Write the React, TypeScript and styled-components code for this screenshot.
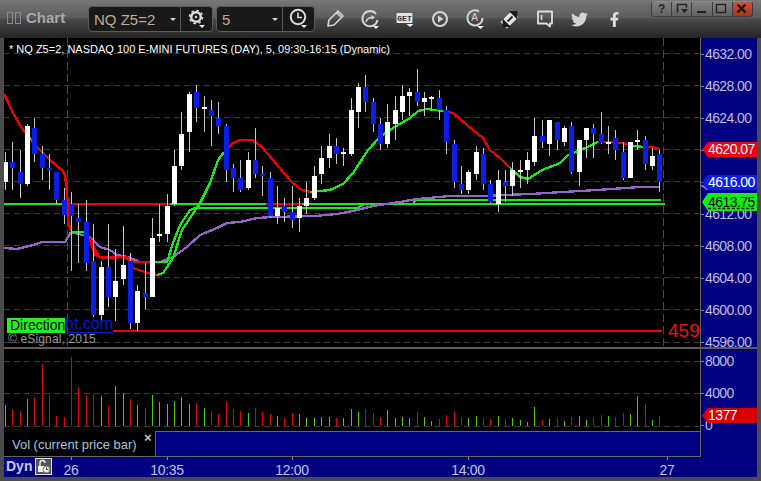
import React from "react";
import styled, { createGlobalStyle } from "styled-components";
import { FaTwitter, FaFacebookF } from "react-icons/fa";

const Global = createGlobalStyle`
  html, body { margin: 0; padding: 0; background: #4a4a4a; }
  body { font-family: "Liberation Sans", Arial, sans-serif; }
`;

const Win = styled.div`
  width: 761px; height: 481px; display: flex; flex-direction: column;
  background: #4c4c4c; overflow: hidden;
`;
const Toolbar = styled.div`
  height: 38px; flex: none; display: flex; align-items: flex-start;
  background: linear-gradient(#787878 0, #5a5a5a 47%, #4a4a4a 50%, #242424 100%);
`;
const Grip = styled.div`
  display: flex; gap: 2px; margin: 12px 5px 0 7px;
`;
const GripBar = styled.span`
  width: 4px; height: 10px; border: 1px solid #8a8a8a; display: block;
`;
const TitleText = styled.div`
  font-weight: 700; font-size: 15px; color: #a9a9a9; line-height: 18px; margin-top: 9px; width: 62px;
`;
const Combo = styled.div<{ $w: number; $mr: number }>`
  width: ${p => p.$w}px; margin: 6px ${p => p.$mr}px 0 0; height: 26px; box-sizing: border-box;
  display: flex; align-items: stretch; background: #191919;
  border: 1px solid #5a5a5a; border-radius: 4px;
`;
const ComboText = styled.div`
  flex: 1; display: flex; align-items: center; justify-content: space-between;
  padding: 0 3px 0 5px; color: #bcae92; font-size: 15px;
`;
const Caret = styled.span`
  width: 0; height: 0; border-left: 3px solid transparent; border-right: 3px solid transparent;
  border-top: 3px solid #cfcfcf; margin-right: 1px;
`;
const ComboBtn = styled.div`
  width: 31px; flex: none; border-left: 1px solid #555; display: flex; align-items: center; justify-content: center;
`;
const IconSlot = styled.div`
  width: 35px; height: 38px; flex: none; display: flex; align-items: center; justify-content: center; color: #d6d6d6;
`;
const WinButtons = styled.div`
  margin: 1px 9px 0 auto; width: 100px; height: 14px; display: flex; box-sizing: content-box;
  border: 1px solid #3c3c3c; border-top: 1px solid #8a8a8a; border-radius: 3px 3px 4px 4px; overflow: hidden; background: #6a6a6a;
  position: relative; right: -1px;
`;
const WinBtn = styled.div<{ $close?: boolean }>`
  flex: 1; display: flex; align-items: center; justify-content: center; font-size: 12px; font-weight: 700;
  color: #222; border-left: 1px solid #3e3e3e;
  background: ${p => (p.$close ? "linear-gradient(#c8553c,#a8341c)" : "linear-gradient(#828282,#626262)")};
  &:first-child { border-left: none; }
`;
const Content = styled.div`
  flex: none; margin: 0 4px; width: 753px; display: flex; flex-direction: column;
`;
const PriceRow = styled.div`
  height: 309px; display: flex;
`;
const Plot = styled.div`
  width: 696px; height: 309px; background: #000; position: relative; overflow: hidden; flex: none;
`;
const Axis = styled.div`
  width: 57px; flex: none; background: #000080; border-left: 1px solid #666; box-sizing: border-box;
  position: relative; overflow: hidden;
`;
const AxisLabel = styled.div`
  height: 32px; line-height: 32px; font-size: 14px; letter-spacing: -0.6px; color: #bcbce4; padding-left: 4px; position: relative;
  &::before { content: ""; position: absolute; left: 0; top: 16px; width: 3px; height: 1px; background: #888; }
`;
const VolLabels = styled.div`
  margin-top: -4px;
`;
const Tag = styled.div<{ $top: number; $bg: string; $fg: string; $h: number; $dashed?: boolean }>`
  position: absolute; left: 1px; width: 56px; top: ${p => p.$top}px; height: ${p => p.$h}px;
  line-height: ${p => p.$h}px; background: ${p => p.$bg}; color: ${p => p.$fg};
  font-size: 14px; letter-spacing: -0.55px; padding-left: 6px; box-sizing: border-box;
  clip-path: polygon(0 50%, 6px 0, 100% 0, 100% 100%, 6px 100%);
  text-decoration: ${p => (p.$dashed ? "underline dashed #222" : "none")};
`;
const Stub = styled.svg`
  position: absolute; left: 0; top: 147px;
`;
const Separator = styled.div`
  height: 2px; background: #5c5c5c;
`;
const VolRow = styled.div`
  height: 107px; display: flex;
`;
const VolLeft = styled.div`
  width: 696px; flex: none; display: flex; flex-direction: column;
`;
const VolPlot = styled.div`
  height: 82px; background: #000;
`;
const Legend = styled.div`
  height: 25px; display: flex;
`;
const LegendName = styled.div`
  width: 151px; background: #000; color: #a9c3dc; font-size: 13px; position: relative; box-sizing: border-box;
  padding: 5px 0 0 8px; line-height: 17px; letter-spacing: -0.02px;
`;
const LegendClose = styled.span`
  position: absolute; left: 140px; top: 0; font-size: 13px; font-weight: 700; color: #c8c8c8; line-height: 13px;
`;
const LegendBlue = styled.div`
  flex: 1; background: #000080; border-top: 1px solid #666; border-left: 1px solid #666;
`;
const TimeRow = styled.div`
  height: 21px; background: #000080; display: flex;
`;
const TimeAxis = styled.div`
  width: 697px; flex: none; border-top: 1px solid #666; position: relative; box-sizing: border-box;
`;
const DynLabel = styled.span`
  position: absolute; left: 2px; top: 1px; font-weight: 700; font-size: 14px; line-height: 17px; color: #c4c8ec;
`;
const DynBtn = styled.div`
  position: absolute; left: 31px; top: 1px; width: 17px; height: 17px; box-sizing: border-box;
  background: #555; border: 1px solid #ddd; display: flex; align-items: center; justify-content: center;
`;
const TimeTick = styled.span<{ $x: number }>`
  position: absolute; left: ${p => p.$x}px; top: 0; width: 1px; height: 3px; background: #888;
`;
const TimeLabel = styled.span<{ $x: number }>`
  position: absolute; left: ${p => p.$x}px; top: 5px; transform: translateX(-50%);
  font-size: 14px; line-height: 16px; letter-spacing: -0.3px; color: #bcc4ec;
`;
const ChartTitle = styled.div`
  position: absolute; left: 5px; top: 5px; font-size: 11px; line-height: 13px; color: #fff; white-space: nowrap;
`;
const Direction = styled.div`
  position: absolute; left: 3px; top: 280px; width: 58px; height: 15px; background: #22f01a; color: #000;
  font-size: 14px; line-height: 15px; padding-left: 3px; box-sizing: border-box;
`;
const LinkText = styled.div`
  position: absolute; left: 61px; top: 277px; font-size: 16px; line-height: 18px; color: #0018d8;
  border-bottom: 1px solid #0018d8; height: 17px; width: 48px; overflow: hidden; white-space: nowrap;
`;
const Copy = styled.div`
  position: absolute; left: 4px; top: 294px; font-size: 12px; line-height: 14px; color: #9a9a9a; letter-spacing: 0.15px;
`;
const LastValue = styled.div`
  position: absolute; left: 664px; top: 282px; font-size: 19px; line-height: 22px; color: #ee1111; white-space: nowrap;
`;
const ChartSvg = styled.svg`
  position: absolute; left: 0; top: 0; display: block;
`;
const VolSvg = styled.svg`
  display: block;
`;

type C = [string, number, number, number, number];
const candles: C[] = [
  ["w",162,182,152,190],["b",162,168,142,190],["b",172,184,150,198],["w",126,184,124,186],["b",128,154,118,162],
  ["b",154,168,146,180],["b",168,170,154,190],["b",172,200,172,204],["b",200,215,188,224],["b",204,216,192,271],
  ["b",218,222,204,263],["b",222,263,200,271],["b",261,315,224,317],["w",267,315,261,321],["b",267,297,224,307],
  ["w",281,297,249,321],["w",265,279,226,285],["b",261,323,253,329],["w",291,323,285,331],["b",293,297,263,309],
  ["w",238,297,218,297],["w",234,236,204,242],["w",206,234,194,242],["w",166,204,150,206],["w",134,166,112,170],
  ["w",94,132,92,152],["b",92,108,85,122],["w",107,109,96,132],["b",110,116,100,146],["b",118,126,102,134],
  ["b",126,170,124,182],["b",168,178,164,192],["b",178,190,160,192],["w",160,188,152,190],["b",160,174,128,178],
  ["b",174,176,166,196],["b",178,216,172,218],["w",208,216,186,224],["b",206,212,198,222],["b",212,220,186,228],
  ["w",206,218,198,232],["w",198,206,182,214],["w",176,198,166,200],["w",158,174,146,184],["w",146,158,134,168],
  ["b",146,154,138,164],["w",152,154,148,166],["w",110,154,98,156],["w",87,112,83,128],["b",87,102,75,112],
  ["b",102,124,98,132],["b",124,144,118,150],["w",122,144,104,148],["w",110,124,96,140],["w",96,112,85,120],
  ["w",92,96,88,116],["b",92,102,69,106],["w",98,102,92,116],["w",97,99,96,110],["b",98,110,90,120],
  ["b",110,142,106,154],["b",144,182,140,188],["b",184,190,166,194],["w",172,190,170,194],["w",152,174,146,180],
  ["b",154,184,148,190],["b",184,202,180,203],["w",180,204,170,212],["b",182,186,170,202],["w",170,186,162,196],
  ["w",170,172,160,188],["w",160,170,152,184],["w",136,162,118,166],["b",136,142,120,148],["w",120,144,120,156],
  ["b",122,140,122,150],["w",128,142,126,146],["b",126,172,122,174],["w",140,172,140,186],["w",128,140,128,158],
  ["b",128,134,124,158],["b",134,143,112,144],["w",142,144,126,154],["b",138,150,130,160],["b",152,178,142,180],
  ["w",142,178,142,178],["w",140,142,130,150],["b",140,164,136,170],["w",156,166,148,170],["b",154,182,150,192],
];
const cx = (i: number) => Math.floor(5.45 + i * 7.354);

const vols: [string, number][] = [
  ["g",195],["r",208],["r",213],["g",177],["r",171],["r",72],["r",165],["r",228],["r",232],["r",52],
  ["r",141],["r",165],["r",162],["g",168],["r",198],["g",138],["g",159],["r",177],["g",195],["r",204],
  ["g",165],["g",186],["g",192],["g",183],["g",171],["g",192],["r",189],["g",204],["r",213],["r",222],
  ["r",186],["r",207],["r",213],["g",219],["r",204],["r",216],["r",222],["g",228],["r",234],["r",219],
  ["g",222],["g",234],["g",234],["g",231],["g",231],["r",234],["g",234],["g",207],["g",216],["r",207],
  ["r",219],["r",231],["g",210],["g",234],["g",231],["g",234],["r",216],["g",231],["g",243],["r",237],
  ["r",225],["r",216],["r",231],["g",234],["g",228],["r",234],["r",237],["g",228],["r",237],["g",234],
  ["g",240],["g",246],["g",201],["r",240],["g",237],["r",234],["g",243],["r",231],["g",228],["g",240],
  ["r",234],["r",225],["g",228],["r",231],["r",219],["g",222],["g",168],["r",192],["g",240],["r",228],
];

const RED = "#f00000";
const GREEN = "#10f010";
const PURPLE = "#9464c8";
const segs: [string, number[][]][] = [
  [PURPLE, [[4,248],[17,249],[33,245],[42,242],[65,242],[71,232],[90,237],[100,247],[110,250],[117,255],[128,257],[140,262],[160,262],[173,257],[187,247],[200,235],[217,228],[227,223],[240,222],[257,218],[273,217],[315,216],[337,214],[353,211],[373,206],[400,202],[417,199],[450,196],[480,196],[530,194],[563,192],[597,190],[640,187],[660,187]]],
  [RED, [[4,94],[8,102],[13,113],[20,125],[25,132],[28,136]]],
  [GREEN, [[28,136],[31,140]]],
  [RED, [[31,140],[38,148],[50,160],[63,171],[65,176],[66,183],[68,203],[68,220],[71,232]]],
  [RED, [[86,232],[90,240],[95,255],[103,258],[127,257],[133,268],[148,273],[157,275]]],
  [GREEN, [[157,275],[163,273],[173,258],[182,230],[200,203],[210,183],[218,160],[224,152]]],
  [RED, [[224,152],[233,143],[240,140],[253,140],[262,147],[273,160],[290,180],[300,189],[310,192]]],
  [GREEN, [[310,192],[320,191],[330,190],[343,184],[353,173],[368,150],[380,137],[393,128],[410,118],[418,111],[427,109],[443,111]]],
  [RED, [[443,111],[453,113],[473,130],[483,138],[490,150],[500,158],[510,168]]],
  [GREEN, [[510,168],[520,177],[528,179],[542,170],[560,163],[568,155],[583,149],[598,142]]],
  [RED, [[598,142],[608,142],[623,143],[633,146]]],
  [GREEN, [[633,146],[645,147]]],
  [RED, [[645,147],[652,147],[660,149]]],
  [GREEN, [[71,232],[86,232]]],
  [RED, [[90,237],[95,250],[100,257],[110,257],[123,257],[130,260],[133,262],[147,262],[155,262]]],
  [GREEN, [[155,262],[167,262],[173,243],[180,225],[190,210],[200,207]]],
];

const gridY = [53, 85, 117, 149, 181, 213, 245, 277, 309, 342];
const pts = (a: number[][]) => a.map(p => p.join(",")).join(" ");
const prices = ["4632.00","4628.00","4624.00","","","4612.00","4608.00","4604.00","4600.00","4596.00"];

const Gear = () => (
  <svg width="20" height="22" viewBox="0 0 20 22">
    <circle cx="9" cy="9" r="4.8" fill="none" stroke="#ddd" strokeWidth="2.4" />
    <circle cx="9" cy="9" r="6.6" fill="none" stroke="#ddd" strokeWidth="1.4" strokeDasharray="2.6 2.6" />
    <circle cx="9" cy="9" r="1.2" fill="#ddd" />
    <path d="M12 17h6l-3 3z" fill="#eee" />
  </svg>
);
const Clock = () => (
  <svg width="20" height="22" viewBox="0 0 20 22">
    <circle cx="9" cy="9" r="7.2" fill="none" stroke="#ddd" strokeWidth="2" />
    <path d="M9 4.5V9.5H13" fill="none" stroke="#ddd" strokeWidth="1.6" />
    <path d="M12 17h6l-3 3z" fill="#eee" />
  </svg>
);
const Pencil = () => (
  <svg width="20" height="20" viewBox="0 0 20 20">
    <path d="M3 17l1-6L13 2l5 5-9 9z M11.500 3.500l5 5" fill="none" stroke="#cfcfcf" strokeWidth="1.7" strokeLinejoin="round" />
  </svg>
);
const CircleArrow = () => (
  <svg width="20" height="20" viewBox="0 0 20 20">
    <path d="M16 5A7.6 7.6 0 1 0 17.5 11" fill="none" stroke="#d4d4d4" strokeWidth="2" />
    <path d="M6 13c1-3 3-4.500 6-4.500" fill="none" stroke="#d4d4d4" strokeWidth="1.6" />
    <path d="M11.500 6l3.500 2.500-3.500 2.500z" fill="#d4d4d4" />
    <path d="M13 17h6l-3 3z" fill="#eee" />
  </svg>
);
const GetIcon = () => (
  <svg width="30" height="26" viewBox="0 0 30 26">
    <rect x="6.500" y="7" width="16" height="10" rx="1" fill="#e2e2e2" />
    <text x="14.500" y="15" fontFamily="Liberation Mono, monospace" fontWeight="700" fontSize="8" textAnchor="middle" fill="#333">GET</text>
    <path d="M16.500 18h7l-3.500 3z" fill="#f0f0f0" />
  </svg>
);
const Play = () => (
  <svg width="18" height="18" viewBox="0 0 18 18">
    <circle cx="9" cy="9" r="7" fill="none" stroke="#d4d4d4" strokeWidth="2" />
    <path d="M7 5.500L12.500 9 7 12.500z" fill="#d4d4d4" />
  </svg>
);
const ACircle = () => (
  <svg width="20" height="24" viewBox="0 0 20 24">
    <path d="M14 4.500A7.600 7.600 0 1 0 17.500 11" fill="none" stroke="#d4d4d4" strokeWidth="2" />
    <text x="9.500" y="14" fontFamily="Liberation Sans, sans-serif" fontSize="10" textAnchor="middle" fill="#d4d4d4">A</text>
    <path d="M12 19h7l-3.500 3z" fill="#f0f0f0" />
  </svg>
);
const Diamond = () => (
  <svg width="20" height="20" viewBox="0 0 20 20">
    <path d="M1.500 13L12 2.500 17.500 8 7 18.500z" fill="#e4e4e4" stroke="#e4e4e4" strokeLinejoin="round" strokeWidth="1.500" />
    <path d="M11 2.800h5.500V8.300zM9 17.200H3.500V11.700zM7.500 12.500l5-5" fill="#1c1c1c" stroke="#1c1c1c" strokeWidth="1.800" />
  </svg>
);
const Comment = () => (
  <svg width="18" height="18" viewBox="0 0 18 18">
    <path d="M2 1.500h14v12h-2v3l-3.500-3H2z" fill="none" stroke="#ddd" strokeWidth="1.800" strokeLinejoin="round" />
    <path d="M5.500 5v5" stroke="#ddd" strokeWidth="1.600" />
  </svg>
);
const Restore = () => (
  <svg width="14" height="12" viewBox="0 0 14 12">
    <path d="M2.500 9.500v-8h9v3" fill="none" stroke="#222" strokeWidth="1.500" />
    <path d="M6 6h7l-3.500 4z" fill="#222" />
  </svg>
);
const Minimize = () => (
  <svg width="12" height="12" viewBox="0 0 12 12"><rect x="1" y="8" width="9" height="2" fill="#222" /></svg>
);
const Maximize = () => (
  <svg width="14" height="12" viewBox="0 0 14 12"><rect x="1.500" y="1.500" width="9" height="8" fill="none" stroke="#222" strokeWidth="1.300" /></svg>
);
const CloseX = () => (
  <svg width="12" height="12" viewBox="0 0 12 12"><path d="M1.500 1.500l8 8M9.500 1.500l-8 8" stroke="#2a1008" strokeWidth="2.400" /></svg>
);
const LockClock = () => (
  <svg width="15" height="15" viewBox="0 0 15 15">
    <path d="M4 7V4a2.500 2.500 0 0 1 5 0" fill="none" stroke="#eee" strokeWidth="1.400" />
    <rect x="2" y="7" width="7" height="6" fill="#eee" />
    <circle cx="10.500" cy="10.500" r="3.500" fill="#eee" stroke="#555" strokeWidth="0.800" />
    <path d="M10.500 8.500v2h2" fill="none" stroke="#333" strokeWidth="0.900" />
  </svg>
);

const PriceChart = () => (
  <ChartSvg width={696} height={309} viewBox="4 38 696 309" shapeRendering="crispEdges">
    {gridY.map(y => (
      <line key={y} x1={4} x2={700} y1={y + 0.5} y2={y + 0.5} stroke="#3a3a3a" strokeDasharray="6 4" />
    ))}
    {[67, 663].map(x => (
      <line key={x} x1={x + 0.5} x2={x + 0.5} y1={38} y2={347} stroke="#4a4a4a" strokeDasharray="8 4" />
    ))}
    <rect x={4} y={203} width={661} height={2} fill={GREEN} />
    <polyline points="193,208 357,208 365,204 413,204 416,200 661,200" fill="none" stroke={GREEN} strokeWidth={2.2} />
    <rect x={68} y={203} width={102} height={2} fill={RED} />
    <rect x={266} y={203} width={36} height={2} fill={RED} />
    {segs.map(([color, p], i) => (
      <polyline key={i} points={pts(p)} fill="none" stroke={color} strokeWidth={2.3} />
    ))}
    <rect x={113} y={330} width={549} height={2} fill={RED} />
    {candles.map((c, i) => {
      const x = cx(i);
      return <rect key={"w" + i} x={x} y={c[3]} width={1} height={c[4] - c[3]} fill="#c6c6c6" />;
    })}
    {candles.map((c, i) => {
      const x = cx(i);
      return <rect key={"b" + i} x={x - 2} y={c[1]} width={5} height={Math.max(2, c[2] - c[1])} fill={c[0] === "w" ? "#fff" : "#0a1ee8"} />;
    })}
  </ChartSvg>
);

const VolumeChart = () => (
  <VolSvg width={696} height={82} viewBox="4 349 696 82" shapeRendering="crispEdges">
    {[361, 393, 426].map(y => (
      <line key={y} x1={4} x2={700} y1={y + 0.5} y2={y + 0.5} stroke="#3a3a3a" strokeDasharray="6 4" />
    ))}
    {vols.map(([c, t], i) => (
      <rect key={i} x={cx(i)} y={340 + t / 3} width={1} height={426 - (340 + t / 3)} fill={c === "g" ? "#44d000" : "#e40000"} />
    ))}
  </VolSvg>
);

const times: [number, string][] = [[67, "26"], [163, "10:35"], [288, "12:00"], [464, "14:00"], [663, "27"]];

export default function App() {
  return (
    <Win>
      <Global />
      <Toolbar>
        <Grip><GripBar /><GripBar /></Grip>
        <TitleText>Chart</TitleText>
        <Combo $w={125} $mr={3}>
          <ComboText>NQ Z5=2<Caret /></ComboText>
          <ComboBtn><Gear /></ComboBtn>
        </Combo>
        <Combo $w={99} $mr={2}>
          <ComboText>5<Caret /></ComboText>
          <ComboBtn><Clock /></ComboBtn>
        </Combo>
        <IconSlot><Pencil /></IconSlot>
        <IconSlot><CircleArrow /></IconSlot>
        <IconSlot><GetIcon /></IconSlot>
        <IconSlot><Play /></IconSlot>
        <IconSlot><ACircle /></IconSlot>
        <IconSlot><Diamond /></IconSlot>
        <IconSlot><Comment /></IconSlot>
        <IconSlot><FaTwitter size={17} color="#d4d4d4" /></IconSlot>
        <IconSlot><FaFacebookF size={15} color="#dcdcdc" /></IconSlot>
        <WinButtons>
          <WinBtn>?</WinBtn>
          <WinBtn><Restore /></WinBtn>
          <WinBtn><Minimize /></WinBtn>
          <WinBtn><Maximize /></WinBtn>
          <WinBtn $close><CloseX /></WinBtn>
        </WinButtons>
      </Toolbar>
      <Content>
        <PriceRow>
          <Plot>
            <PriceChart />
            <ChartTitle>* NQ Z5=2, NASDAQ 100 E-MINI FUTURES (DAY), 5, 09:30-16:15 (Dynamic)</ChartTitle>
            <LinkText>ht.com</LinkText>
            <Direction>Direction</Direction>
            <Copy>© eSignal, 2015</Copy>
            <LastValue>4597.50</LastValue>
          </Plot>
          <Axis>
            {prices.map((p, i) => <AxisLabel key={i}>{p}</AxisLabel>)}
            <Stub width={12} height={10} viewBox="0 0 12 10">
              <path d="M0 0l6 4h6" fill="none" stroke={PURPLE} strokeWidth="2" />
            </Stub>
            <Tag $top={104} $h={15} $bg="#f00010" $fg="#fff">4620.07</Tag>
            <Tag $top={137} $h={15} $bg="#0a1ef0" $fg="#fff">4616.00</Tag>
            <Tag $top={155} $h={18} $bg="#10f010" $fg="#000" $dashed>4613.75</Tag>
          </Axis>
        </PriceRow>
        <Separator />
        <VolRow>
          <VolLeft>
            <VolPlot><VolumeChart /></VolPlot>
            <Legend>
              <LegendName>Vol (current price bar)<LegendClose>×</LegendClose></LegendName>
              <LegendBlue />
            </Legend>
          </VolLeft>
          <Axis>
            <VolLabels>
              <AxisLabel>8000</AxisLabel>
              <AxisLabel>4000</AxisLabel>
              <AxisLabel>0</AxisLabel>
            </VolLabels>
            <Tag $top={59} $h={15} $bg="#d80000" $fg="#fff">1377</Tag>
          </Axis>
        </VolRow>
        <TimeRow>
          <TimeAxis>
            <DynLabel>Dyn</DynLabel>
            <DynBtn><LockClock /></DynBtn>
            {times.map(([x, t]) => (
              <React.Fragment key={t}>
                <TimeTick $x={x} />
                <TimeLabel $x={x}>{t}</TimeLabel>
              </React.Fragment>
            ))}
          </TimeAxis>
        </TimeRow>
      </Content>
    </Win>
  );
}
